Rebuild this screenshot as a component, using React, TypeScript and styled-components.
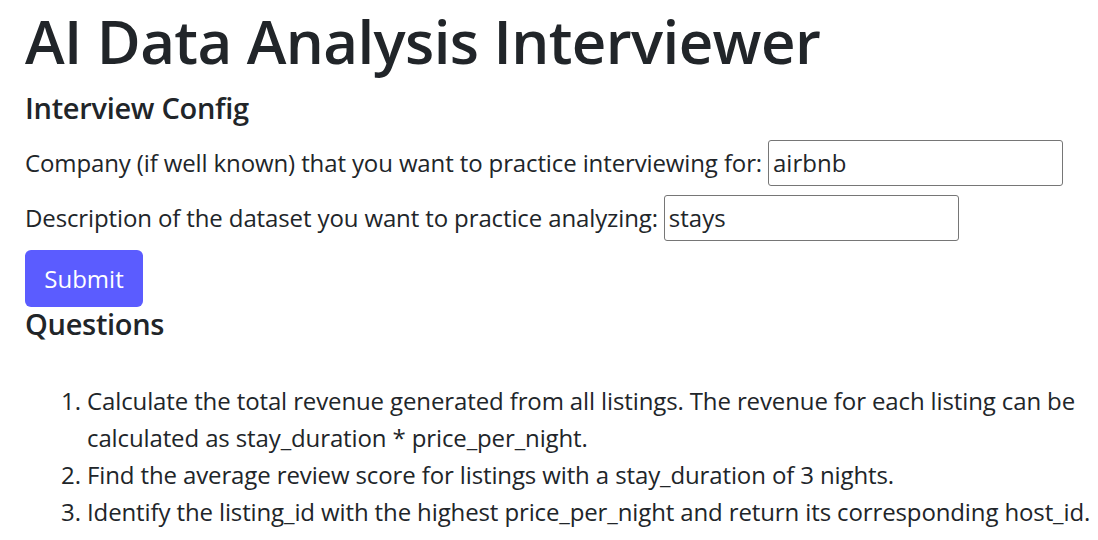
import React, { useState } from 'react';
import styled, { createGlobalStyle } from 'styled-components';

const GlobalStyle = createGlobalStyle`
  html, body {
    margin: 0;
    padding: 0;
    background: #fff;
  }
  body {
    font-family: "Open Sans", "Noto Sans", sans-serif;
    color: #212529;
  }
  * {
    box-sizing: border-box;
  }
`;

const Page = styled.main`
  padding: 5px 0 0 25px;
  display: flex;
  flex-direction: column;
`;

const Title = styled.h1`
  margin: 0;
  font-size: 60px;
  font-weight: 600;
  line-height: 1.2;
  letter-spacing: -0.6px;
`;

const SectionTitle = styled.h2`
  margin: ${p => p.$top || 0}px 0 0;
  font-size: 29px;
  font-weight: 600;
  line-height: 1.2;
  letter-spacing: -0.3px;
`;

const Form = styled.form`
  display: flex;
  flex-direction: column;
  align-items: flex-start;
  gap: 9px;
  margin-top: 14px;
`;

const Field = styled.label`
  display: flex;
  align-items: center;
  gap: 6px;
  font-size: 24px;
  line-height: 1.5;
  letter-spacing: -0.12px;
`;

const Input = styled.input`
  width: 295px;
  height: 46px;
  padding: 0 4px;
  border: 1px solid #767676;
  border-radius: 3px;
  font: inherit;
  font-size: 24px;
  color: #212529;
  background: #fff;
  outline: none;
`;

const Button = styled.button`
  width: 118px;
  height: 57px;
  border: none;
  border-radius: 6px;
  background: #5b5cff;
  color: #fff;
  font-family: inherit;
  font-size: 24px;
  cursor: pointer;
`;

const List = styled.ol`
  margin: 40px 0 0;
  padding-left: 62px;
  font-size: 24px;
  line-height: 37px;
  letter-spacing: -0.12px;
`;

const Item = styled.li`
  padding-left: 0;
`;

const questions = [
  'Calculate the total revenue generated from all listings. The revenue for each listing can be calculated as stay_duration * price_per_night.',
  'Find the average review score for listings with a stay_duration of 3 nights.',
  'Identify the listing_id with the highest price_per_night and return its corresponding host_id.',
];

const App = () => {
  const [company, setCompany] = useState('airbnb');
  const [dataset, setDataset] = useState('stays');

  return (
    <>
      <GlobalStyle />
      <Page>
        <Title>AI Data Analysis Interviewer</Title>
        <SectionTitle $top={14}>Interview Config</SectionTitle>
        <Form onSubmit={e => e.preventDefault()}>
          <Field>
            Company (if well known) that you want to practice interviewing for:
            <Input value={company} onChange={e => setCompany(e.target.value)} />
          </Field>
          <Field>
            Description of the dataset you want to practice analyzing:
            <Input value={dataset} onChange={e => setDataset(e.target.value)} />
          </Field>
          <Button type="submit">Submit</Button>
        </Form>
        <SectionTitle>Questions</SectionTitle>
        <List>
          {questions.map(q => (
            <Item key={q}>{q}</Item>
          ))}
        </List>
      </Page>
    </>
  );
};

export default App;
